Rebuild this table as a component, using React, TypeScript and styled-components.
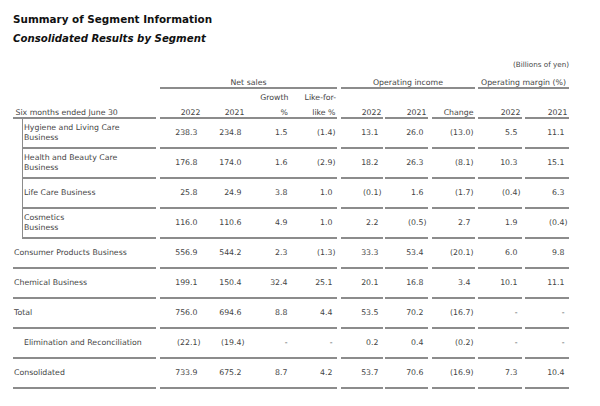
import React from 'react';
import styled, { createGlobalStyle } from 'styled-components';

const GlobalStyle = createGlobalStyle`
  html, body {
    margin: 0;
    padding: 0;
    background: #fff;
  }
`;

type Col = { w: number; ml: number };

// label, net sales x4, operating income x3, operating margin x2
const COLS: Col[] = [
  { w: 143, ml: 0 },
  { w: 42, ml: 4 },
  { w: 44, ml: 0 },
  { w: 46, ml: 0 },
  { w: 45, ml: 0 },
  { w: 42, ml: 4 },
  { w: 43, ml: 2 },
  { w: 43, ml: 4 },
  { w: 44, ml: 3 },
  { w: 44, ml: 3 },
];

type RowData = {
  label: string
  sub?: boolean
  indent?: boolean
  values: string[]
};

const ROWS: RowData[] = [
  { label: 'Hygiene and Living Care\nBusiness', sub: true, values: ['238.3', '234.8', '1.5', '(1.4)', '13.1', '26.0', '(13.0)', '5.5', '11.1'] },
  { label: 'Health and Beauty Care\nBusiness', sub: true, values: ['176.8', '174.0', '1.6', '(2.9)', '18.2', '26.3', '(8.1)', '10.3', '15.1'] },
  { label: 'Life Care Business', sub: true, values: ['25.8', '24.9', '3.8', '1.0', '(0.1)', '1.6', '(1.7)', '(0.4)', '6.3'] },
  { label: 'Cosmetics\nBusiness', sub: true, values: ['116.0', '110.6', '4.9', '1.0', '2.2', '(0.5)', '2.7', '1.9', '(0.4)'] },
  { label: 'Consumer Products Business', values: ['556.9', '544.2', '2.3', '(1.3)', '33.3', '53.4', '(20.1)', '6.0', '9.8'] },
  { label: 'Chemical Business', values: ['199.1', '150.4', '32.4', '25.1', '20.1', '16.8', '3.4', '10.1', '11.1'] },
  { label: 'Total', values: ['756.0', '694.6', '8.8', '4.4', '53.5', '70.2', '(16.7)', '-', '-'] },
  { label: 'Elimination and Reconciliation', indent: true, values: ['(22.1)', '(19.4)', '-', '-', '0.2', '0.4', '(0.2)', '-', '-'] },
  { label: 'Consolidated', values: ['733.9', '675.2', '8.7', '4.2', '53.7', '70.6', '(16.9)', '7.3', '10.4'] },
];

const LINE = '#8c8c8c';

const Page = styled.div`
  width: 600px;
  height: 406px;
  overflow: hidden;
  background: #fff;
  padding: 12px 0 0 13px;
  box-sizing: border-box;
  font-family: "DejaVu Sans", Verdana, sans-serif;
  color: #454545;
`;

const Title = styled.h1`
  margin: 0;
  font-size: 10.4px;
  line-height: 14px;
  font-weight: bold;
  color: #111;
`;

const Subtitle = styled.h2`
  margin: 6px 0 0;
  font-size: 10.2px;
  line-height: 14px;
  font-weight: bold;
  font-style: italic;
  color: #111;
`;

const Unit = styled.div`
  width: 556px;
  margin-top: 14px;
  text-align: right;
  font-size: 7.2px;
  line-height: 10px;
`;

const HeadRow = styled.div<{ $mt: number }>`
  display: flex;
  margin-top: ${({ $mt }) => $mt}px;
  font-size: 7.8px;
  line-height: 9px;
`;

const HeadCell = styled.div<{ $w: number; $ml: number; $line?: boolean; $align?: string; $pr?: number }>`
  flex: none;
  box-sizing: border-box;
  width: ${({ $w }) => $w}px;
  margin-left: ${({ $ml }) => $ml}px;
  padding-right: ${({ $pr }) => $pr ?? 1.5}px;
  text-align: ${({ $align }) => $align ?? 'right'};
  white-space: nowrap;
  border-bottom: 2px solid ${({ $line }) => ($line ? LINE : 'transparent')};
`;

const BodyRow = styled.div`
  display: flex;
  height: 30px;
  font-size: 7.8px;
  line-height: 10px;
`;

const Cell = styled.div<{ $w: number; $ml: number; $pr: number }>`
  flex: none;
  box-sizing: border-box;
  height: 100%;
  width: ${({ $w }) => $w}px;
  margin-left: ${({ $ml }) => $ml}px;
  padding-right: ${({ $pr }) => $pr}px;
  display: flex;
  align-items: center;
  justify-content: flex-end;
  border-bottom: 2px solid ${LINE};
  white-space: nowrap;
`;

const LabelCell = styled.div<{ $sub?: boolean; $indent?: boolean }>`
  flex: none;
  box-sizing: border-box;
  height: 100%;
  width: ${({ $sub }) => ($sub ? 134 : 143)}px;
  margin-left: ${({ $sub }) => ($sub ? 9 : 0)}px;
  padding-left: ${({ $indent }) => ($indent ? 11 : 1)}px;
  display: flex;
  align-items: center;
  white-space: pre-line;
  border-bottom: 2px solid ${LINE};
  border-left: ${({ $sub }) => ($sub ? `1.5px solid ${LINE}` : 'none')};
`;

const label = COLS[0];

export default function App() {
  return (
    <Page>
      <GlobalStyle />
      <Title>Summary of Segment Information</Title>
      <Subtitle>Consolidated Results by Segment</Subtitle>
      <Unit>(Billions of yen)</Unit>

      <HeadRow $mt={8}>
        <HeadCell $w={label.w} $ml={0} />
        <HeadCell $w={177} $ml={4} $line $align="center" $pr={0}>Net sales</HeadCell>
        <HeadCell $w={134} $ml={4} $line $align="center" $pr={0}>Operating income</HeadCell>
        <HeadCell $w={91} $ml={3} $line $align="center" $pr={0}>Operating margin (%)</HeadCell>
      </HeadRow>

      <HeadRow $mt={4}>
        <HeadCell $w={label.w} $ml={0} />
        <HeadCell $w={COLS[1].w} $ml={COLS[1].ml} />
        <HeadCell $w={COLS[2].w} $ml={COLS[2].ml} />
        <HeadCell $w={COLS[3].w} $ml={COLS[3].ml} $pr={3.5}>Growth</HeadCell>
        <HeadCell $w={COLS[4].w} $ml={COLS[4].ml} $pr={1}>Like-for-</HeadCell>
      </HeadRow>

      <HeadRow $mt={4}>
        <HeadCell $w={label.w} $ml={0} $line $align="left">&nbsp;Six months ended June 30</HeadCell>
        {['2022', '2021', '%', 'like %', '2022', '2021', 'Change', '2022', '2021'].map((t, i) => (
          <HeadCell
            key={i}
            $w={COLS[i + 1].w}
            $ml={COLS[i + 1].ml}
            $line
            $pr={t === '%' ? 4 : 1.5}
          >
            {t}
          </HeadCell>
        ))}
      </HeadRow>

      {ROWS.map((row) => (
        <BodyRow key={row.label}>
          <LabelCell $sub={row.sub} $indent={row.indent}>{row.label}</LabelCell>
          {row.values.map((v, i) => (
            <Cell
              key={i}
              $w={COLS[i + 1].w}
              $ml={COLS[i + 1].ml}
              $pr={v.startsWith('(') ? 1.5 : 4.5}
            >
              {v}
            </Cell>
          ))}
        </BodyRow>
      ))}
    </Page>
  );
}
